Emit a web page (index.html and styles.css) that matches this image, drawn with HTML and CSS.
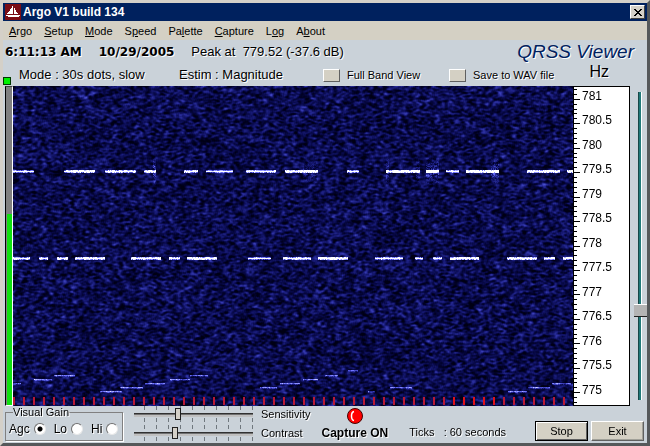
FILE: index.html
```
<!DOCTYPE html>
<html lang="en">
<head>
    <meta charset="UTF-8">
    <meta name="viewport" content="width=device-width, initial-scale=1.0">
    <title>Argo V1 build 134</title>
    <link rel="stylesheet" href="styles.css">
</head>
<body>
    <div class="window">
        <header class="title-bar">
            <svg class="app-icon" viewBox="0 0 16 16" aria-hidden="true">
                <rect width="16" height="16" fill="#7b0c14"/>
                <path d="M7 2h1v8H2V9h1V8h1V7h1V5h1V4h1zM9 4h1v2h1v2h1v1h1v1H9zM1 11h14v1h-1v1H3v-1H1z" fill="#fff"/>
            </svg>
            <h1>Argo V1 build 134</h1>
            <button class="close-btn" aria-label="Close">
                <svg viewBox="0 0 8 7" aria-hidden="true"><path d="M0 0h2v1h1v1h2V1h1V0h2v1H7v1H6v1H5v1h1v1h1v1h1v1H6V6H5V5H3v1H2v1H0V6h1V5h1V4h1V3H2V2H1V1H0z"/></svg>
            </button>
        </header>

        <nav class="menu">
            <a href="#"><u>A</u>rgo</a>
            <a href="#"><u>S</u>etup</a>
            <a href="#"><u>M</u>ode</a>
            <a href="#">S<u>p</u>eed</a>
            <a href="#">Pa<u>l</u>ette</a>
            <a href="#"><u>C</u>apture</a>
            <a href="#">L<u>o</u>g</a>
            <a href="#">A<u>b</u>out</a>
        </nav>

        <div class="status">
            <span class="clock">6:11:13 AM</span>
            <span class="clock">10/29/2005</span>
            <span class="peak">Peak at&nbsp; 779.52 (-37.6 dB)</span>
            <span class="brand">QRSS Viewer</span>
        </div>

        <div class="options">
            <span class="led"></span>
            <span>Mode : 30s dots, slow</span>
            <span>Estim : Magnitude</span>
            <div class="option">
                <button class="push" id="fullBand"></button>
                <label for="fullBand">Full Band View</label>
            </div>
            <div class="option">
                <button class="push" id="saveWav"></button>
                <label for="saveWav">Save to WAV file</label>
            </div>
            <span class="unit">Hz</span>
        </div>

        <main class="scope">
            <div class="meter"><div class="meter-level"></div></div>
            <canvas class="waterfall" id="waterfall" width="560" height="320"></canvas>
            <div class="scale">
                <svg class="ticks" id="ticks" viewBox="0 0 6 318" preserveAspectRatio="none" aria-hidden="true"><path/></svg>
                <ol>
                    <li>781</li>
                    <li>780.5</li>
                    <li>780</li>
                    <li>779.5</li>
                    <li>779</li>
                    <li>778.5</li>
                    <li>778</li>
                    <li>777.5</li>
                    <li>777</li>
                    <li>776.5</li>
                    <li>776</li>
                    <li>775.5</li>
                    <li>775</li>
                </ol>
            </div>
            <input class="tuner" type="range" min="0" max="100" value="72" aria-label="Frequency">
        </main>

        <footer class="controls">
            <fieldset class="gain">
                <legend>Visual Gain</legend>
                <label>Agc <input type="radio" name="gain" checked></label>
                <label>Lo <input type="radio" name="gain"></label>
                <label>Hi <input type="radio" name="gain"></label>
            </fieldset>
            <div class="sliders">
                <input type="range" id="sensitivity" min="0" max="100" value="36">
                <label for="sensitivity">Sensitivity</label>
                <input type="range" id="contrast" min="0" max="100" value="34">
                <label for="contrast">Contrast</label>
            </div>
            <div class="capture">
                <svg viewBox="0 0 16 16" aria-hidden="true">
                    <circle cx="8" cy="8" r="7.5" fill="#f00" stroke="#400"/>
                    <path d="M7 3.5Q4.500 4 4.500 8T7 12.500" fill="none" stroke="#fff" stroke-width="1.500"/>
                </svg>
                <strong>Capture ON</strong>
            </div>
            <span class="tick-info">Ticks &nbsp; : 60 seconds</span>
            <div class="actions">
                <button class="btn btn-default">Stop</button>
                <button class="btn">Exit</button>
            </div>
        </footer>
    </div>

    <script src="script.js"></script>
</body>
</html>
```
FILE: styles.css
```
* {
    box-sizing: border-box;
}
body {
    margin: 0;
    font-family: "Liberation Sans", Arial, sans-serif;
    font-size: 12px;
    color: #000;
}
button, input {
    margin: 0;
    padding: 0;
    font: inherit;
}
.window {
    display: flex;
    flex-direction: column;
    min-height: 100vh;
    border: 3px solid #d4d0c8;
    border-right-color: #55585a;
    border-bottom-color: #55585a;
    background-color: #cad2d9;
}

/* Title bar and menu */
.title-bar {
    display: flex;
    align-items: center;
    gap: 2px;
    height: 18px;
    padding: 0 2px;
    background-color: #00215e;
    color: #fff;
}
.app-icon {
    width: 16px;
    height: 16px;
}
h1 {
    flex: 1;
    margin: 0;
    font-size: 12px;
    line-height: 18px;
}
.close-btn {
    display: flex;
    align-items: center;
    justify-content: center;
    width: 15px;
    height: 14px;
    border: 1px solid;
    border-color: #fff #404040 #404040 #fff;
    background-color: #d4d0c8;
}
.close-btn svg {
    width: 8px;
    height: 7px;
}
.menu {
    display: flex;
    gap: 12px;
    height: 19px;
    padding: 0 6px;
    background-color: #d4d0c4;
    font-size: 11px;
    line-height: 20px;
}
.menu a {
    color: #000;
    text-decoration: none;
}

/* Readouts */
.status, .options {
    text-shadow: 1px 1px #fff;
    white-space: nowrap;
}
.status {
    display: flex;
    align-items: center;
    gap: 17px;
    height: 23px;
    padding: 0 13px 0 2px;
    font-size: 13px;
}
.clock {
    font-family: "DejaVu Sans", sans-serif;
    font-size: 12px;
    font-weight: bold;
}
.brand {
    margin-left: auto;
    color: #00215e;
    font-size: 19px;
    font-style: italic;
}
.options {
    display: grid;
    grid-template-columns: 16px 160px 144px 126px 1fr auto;
    height: 23px;
    padding-right: 38px;
    font-size: 13px;
    line-height: 24px;
}
.led {
    align-self: end;
    width: 8px;
    height: 8px;
    margin-bottom: 2px;
    border: 1px solid #003800;
    background-color: #00f000;
}
.option {
    display: flex;
    align-items: center;
    gap: 7px;
    font-size: 11px;
}
.push {
    width: 17px;
    height: 13px;
    border: 1px solid;
    border-color: #fff #606060 #606060 #fff;
    background-color: #d4d0c4;
}
.unit {
    font-size: 16px;
    line-height: 18px;
}

/* Waterfall */
.scope {
    display: flex;
    flex: 1;
    min-height: 320px;
    padding-left: 2px;
}
.meter {
    display: flex;
    align-items: flex-end;
    width: 8px;
    border: 1px solid;
    border-color: #404040 #fff #fff #000;
    background-color: #808080;
}
.meter-level {
    width: 5px;
    height: 60%;
    margin-left: 1px;
    background-color: #10e010;
}
.waterfall {
    flex: 1;
    min-width: 0;
    background-color: #06063a;
}
.scale {
    display: flex;
    width: 57px;
    border: 1px solid #000;
    background-color: #fff;
}
.ticks {
    width: 6px;
    height: 100%;
}
.ticks path {
    fill: none;
    stroke: #000;
    shape-rendering: crispEdges;
}
.scale ol {
    display: grid;
    grid-auto-rows: 1fr;
    margin: 0;
    padding: 0 0 0 2px;
    list-style: none;
    line-height: 18px;
}
.tuner {
    width: 13px;
    margin: 6px 0 6px 4px;
    appearance: none;
    writing-mode: vertical-lr;
    background: linear-gradient(to right, #184848 1px, #207878 1px, #207878 3px, #fff 3px) 4px 0 / 4px 100% no-repeat;
}
.tuner::-webkit-slider-thumb {
    appearance: none;
    width: 13px;
    height: 13px;
    border-top: 1px solid #fff;
    border-bottom: 1px solid #202020;
    background-color: #b4b4b4;
}

/* Bottom panel */
.controls {
    display: flex;
    height: 37px;
    padding: 0 3px 0 2px;
    text-shadow: 1px 1px #fff;
    white-space: nowrap;
}
.gain {
    display: flex;
    align-items: center;
    gap: 8px;
    width: 118px;
    height: 35px;
    min-width: 0;
    margin: 0;
    padding: 0 3px;
    border: 1px solid #808080;
    box-shadow: 1px 1px #fff;
}
.gain legend {
    padding: 0;
    margin-left: 4px;
    font-size: 11px;
    line-height: 12px;
}
.gain label {
    display: flex;
    flex: none;
    align-items: center;
    gap: 4px;
}
.gain input {
    width: 12px;
    height: 12px;
    appearance: none;
    border: 1px solid;
    border-color: #707070 #e8e8e8 #e8e8e8 #707070;
    border-radius: 50%;
    background-color: #fff;
}
.gain input:checked {
    background-image: radial-gradient(circle, #000 2px, #fff 3px);
}
.sliders {
    display: grid;
    grid-template-columns: 119px auto;
    grid-template-rows: 16px 16px;
    gap: 3px 8px;
    margin-left: 11px;
    font-size: 11px;
    line-height: 16px;
}
.sliders input {
    width: 119px;
    height: 16px;
    appearance: none;
    background:
        linear-gradient(#303030 1px, #707070 1px, #707070 2px, #c0c0c0 2px) 0 7px / 100% 4px no-repeat,
        linear-gradient(transparent 4px, #cad2d9 4px, #cad2d9 12px, transparent 12px),
        repeating-linear-gradient(to right, transparent 0, transparent 10px, #70787e 10px, #70787e 11px, transparent 11px, transparent 12px);
}
.sliders input::-webkit-slider-thumb {
    appearance: none;
    width: 6px;
    height: 12px;
    border: 1px solid #202020;
    background-color: #d4d0c8;
}
.capture {
    display: flex;
    flex-direction: column;
    align-items: center;
    gap: 2px;
    margin-left: 11px;
    padding-top: 2px;
}
.capture svg {
    width: 16px;
    height: 16px;
}
.tick-info {
    margin-left: 21px;
    font-size: 11px;
    line-height: 53px;
}
.actions {
    display: flex;
    gap: 3px;
    margin-left: auto;
    padding-top: 15px;
}
.btn {
    width: 53px;
    height: 20px;
    border: 1px solid;
    border-color: #fff #606060 #606060 #fff;
    box-shadow: inset -1px -1px #a0a098;
    background-color: #d4d0c4;
    color: #000;
    font-size: 11px;
}
.btn-default {
    border-color: #000;
    box-shadow: inset 1px 1px #fff, inset -1px -1px #606060;
}
```
FILE: script.js
```
const canvas = document.getElementById('waterfall');
const ctx = canvas.getContext('2d');
const W = canvas.width;
const H = canvas.height;

let seed = 134;
function rnd() {
    seed = (seed * 1664525 + 1013904223) % 4294967296;
    return seed / 4294967296;
}

// [start, end, strength] of every dash, per carrier
const upper = [
    [0, 21, 0.8], [51, 82, 1.1], [92, 123, 1], [131, 143, 1.1], [171, 185, 1.1], [193, 220, 0.7],
    [233, 263, 1], [272, 305, 1.4], [334, 346, 0.9], [373, 407, 1.4], [413, 426, 1.4],
    [433, 446, 1.1], [453, 486, 1.4], [514, 547, 1.4], [554, 560, 1.4]
];
const lower = [
    [0, 17, 1], [26, 35, 1], [44, 55, 1], [62, 92, 1.1], [118, 148, 1.1], [156, 167, 1],
    [174, 204, 1.2], [235, 258, 0.7], [270, 298, 0.9], [305, 335, 1.2], [362, 390, 0.9],
    [402, 410, 0.8], [420, 429, 0.8], [437, 466, 1.1], [494, 524, 1.1], [531, 542, 1], [550, 560, 1.1]
];
// [x, y, length] of the weak stepped signals
const weak = [
    [0, 297, 8], [21, 293, 18], [41, 289, 21], [87, 305, 22], [107, 301, 23], [132, 297, 20],
    [157, 293, 20], [177, 289, 18], [247, 301, 17], [267, 297, 20], [290, 293, 15],
    [312, 289, 13], [335, 284, 10], [355, 305, 7], [377, 301, 22], [495, 305, 19],
    [515, 301, 22], [539, 297, 19]
];

const level = new Float32Array(W * H);

function drawNoise() {
    const raw = new Float32Array(W * H).map(rnd);
    const at = (x, y) => raw[Math.min(H - 1, Math.max(0, y)) * W + Math.min(W - 1, Math.max(0, x))];
    for (let y = 0; y < H; y++) {
        for (let x = 0; x < W; x++) {
            let sum = 0;
            for (let dx = -2; dx <= 2; dx++) {
                for (let dy = -1; dy <= 1; dy++) {
                    sum += at(x + dx, y + dy) * (3 - Math.abs(dx)) * (2 - Math.abs(dy));
                }
            }
            level[y * W + x] = Math.max(0, (sum / 36 - 0.5) * 1.05 + 0.2);
        }
    }
}

function addDashes(dashes, y) {
    dashes.forEach(([from, to, strength]) => {
        for (let x = from; x < to; x++) {
            level[y * W + x] += strength * 1.3;
            level[(y - 1) * W + x] += strength * (0.4 + rnd() * 0.5);
            level[(y + 1) * W + x] += strength * (0.3 + rnd() * 0.5);
        }
    });
}

// Clicks spread up and down where strong dashes begin and end
function addClicks(from, to, y, strength) {
    for (let dy = -14; dy <= 14; dy++) {
        for (let x = from; x < to; x++) {
            level[(y + dy) * W + x] += rnd() * strength * (1 - Math.abs(dy) / 15);
        }
    }
}

function addWeak() {
    weak.forEach(([from, y, length]) => {
        for (let i = 0; i < length; i++) {
            level[y * W + from + i] += 0.35 + rnd() * 0.25;
            level[(y + 1) * W + from + i] += 0.1 + rnd() * 0.2;
        }
    });
}

function paint() {
    const image = ctx.createImageData(W, H);
    for (let i = 0; i < W * H; i++) {
        const v = Math.min(1, level[i]);
        image.data[i * 4] = 255 * Math.pow(v, 2.1);
        image.data[i * 4 + 1] = 255 * Math.pow(v, 2);
        image.data[i * 4 + 2] = Math.min(255, 20 + 380 * Math.pow(v, 1.2));
        image.data[i * 4 + 3] = 255;
    }
    ctx.putImageData(image, 0, 0);

    for (let x = 0; x < W; x += 10) {
        ctx.fillStyle = x > 430 && x < 490 ? '#e01018' : '#b81834';
        ctx.fillRect(x, H - 9, 2, 8);
    }
}

function drawTicks() {
    let d = '';
    for (let i = 0; i < 65; i++) {
        const y = Math.floor((i + 0.5) * 318 / 65) + 0.5;
        d += 'M0 ' + y + 'h' + (i % 5 === 2 ? 6 : 3);
    }
    document.querySelector('#ticks path').setAttribute('d', d);
}

drawNoise();
addDashes(upper, 85);
addDashes(lower, 172);
addClicks(140, 143, 85, 0.5);
addClicks(413, 426, 85, 0.4);
addClicks(290, 305, 85, 0.2);
addClicks(478, 486, 85, 0.4);
addClicks(373, 376, 85, 0.4);
addClicks(403, 407, 85, 0.3);
addWeak();
paint();
drawTicks();
```
